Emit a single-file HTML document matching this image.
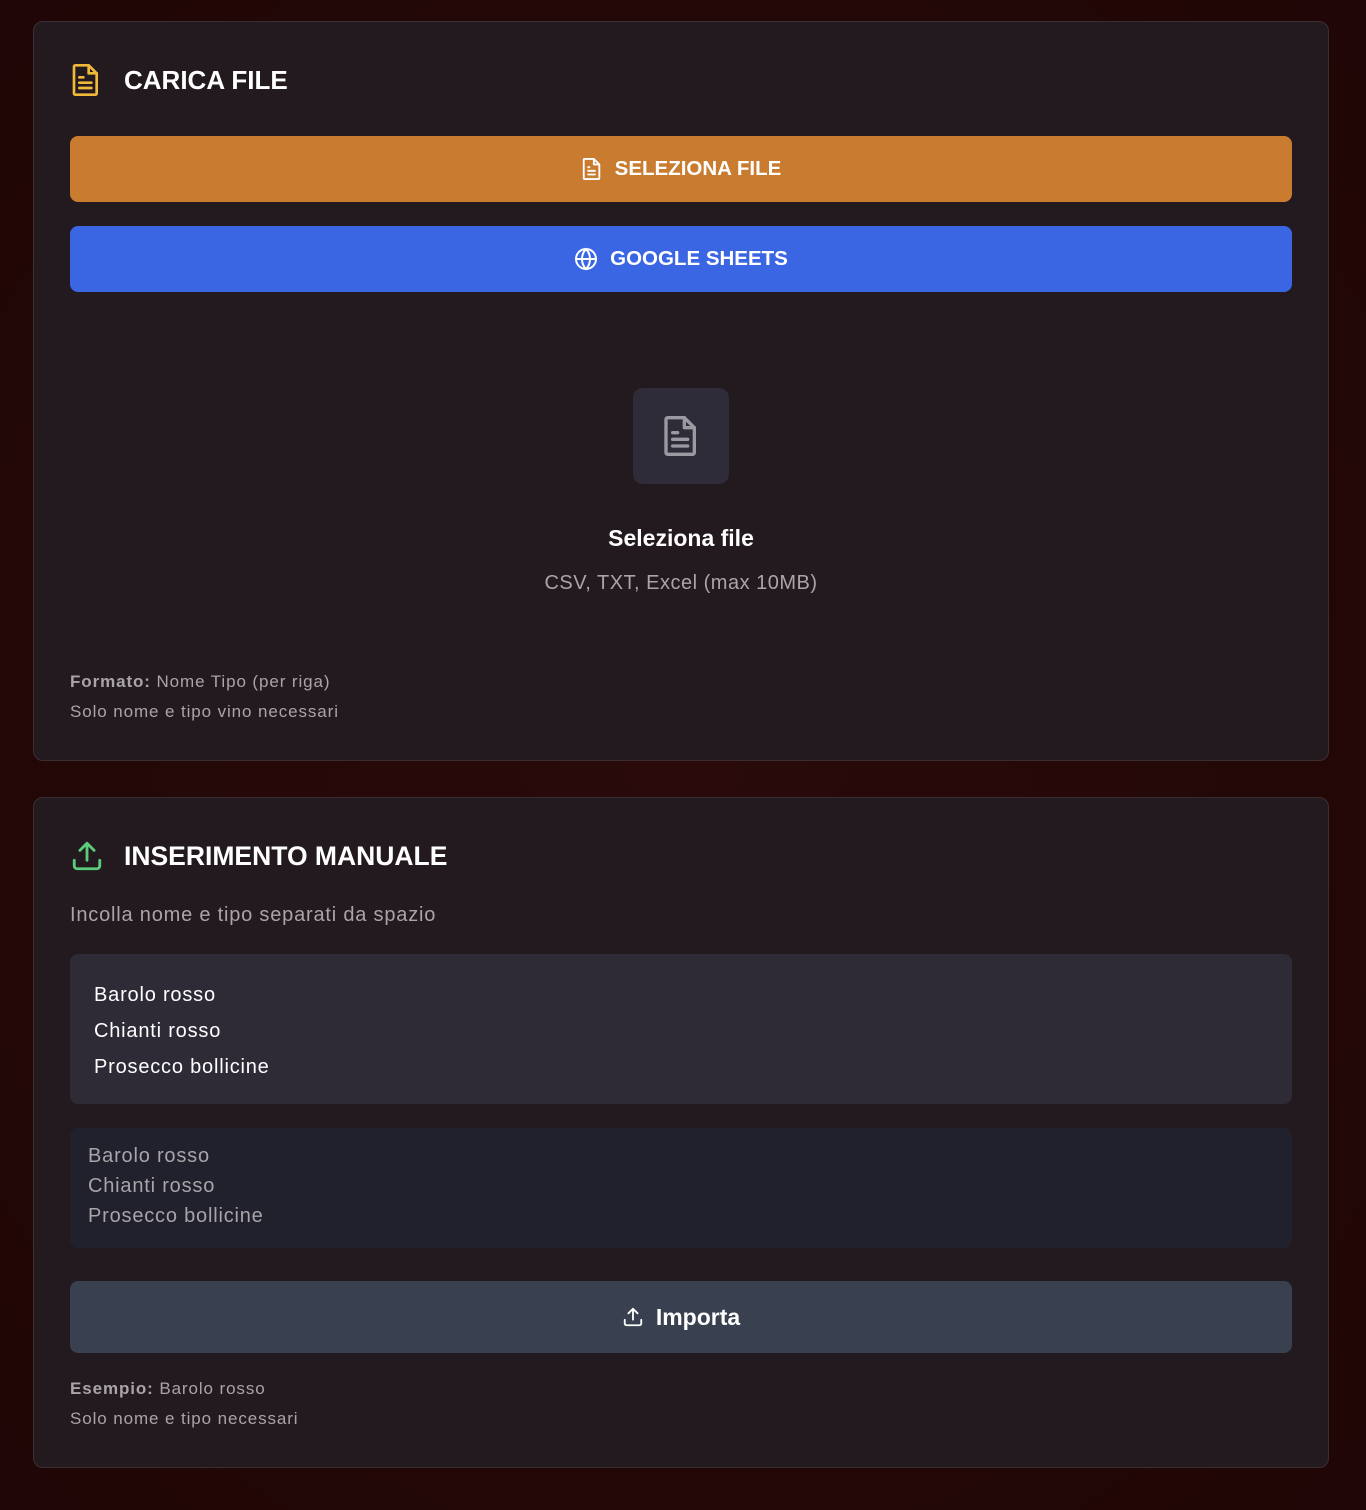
<!DOCTYPE html>
<html><head><meta charset="utf-8"><style>
*{box-sizing:border-box;margin:0;padding:0}
body{width:1366px;height:1510px;background:radial-gradient(ellipse at 50% 50%,#2a0a0a,#200606);font-family:"Liberation Sans",sans-serif;position:relative;overflow:hidden}
.card{position:absolute;left:33px;width:1296px;background:#231a1f;border:1px solid #3a2e33;border-radius:10px}
.h{position:absolute;left:36px;display:flex;align-items:center;color:#fff;font-weight:700;font-size:26px}
.h svg{margin-right:22px}
.btn{position:absolute;left:36px;width:1222px;height:66px;border-radius:8px;display:flex;align-items:center;justify-content:center;color:#fff;font-weight:700;font-size:20.5px;gap:12px}
.sm{position:absolute;left:36px;font-size:17px;color:#a8a4aa;line-height:30px;letter-spacing:0.9px}
</style></head><body>
<div class="card" style="top:21px;height:740px">
 <div class="h" style="top:40px"><svg width="32" height="36" viewBox="0 0 24 26" fill="none" stroke="#f0b93a" stroke-width="2" stroke-linejoin="round" stroke-linecap="round"><path d="M4 2h10l6 6v15a1 1 0 0 1-1 1H4a1 1 0 0 1-1-1V3a1 1 0 0 1 1-1z"/><path d="M14 2v6h6"/><path d="M7 11h3M7 15h9M7 19h9"/></svg>CARICA FILE</div>
 <div class="btn" style="top:114px;background:#c97c30"><svg width="22" height="24" viewBox="0 0 24 26" fill="none" stroke="#fff" stroke-width="2" stroke-linejoin="round"><path d="M4 2h10l6 6v15a1 1 0 0 1-1 1H4a1 1 0 0 1-1-1V3a1 1 0 0 1 1-1z"/><path d="M14 2v6h6M7 11h3M7 15h9M7 19h9"/></svg>SELEZIONA FILE</div>
 <div class="btn" style="top:204px;background:#3a66e3"><svg width="24" height="24" viewBox="0 0 24 24" fill="none" stroke="#fff" stroke-width="2"><circle cx="12" cy="12" r="10"/><path d="M2 12h20M12 2c3 3 4 6 4 10s-1 7-4 10c-3-3-4-6-4-10s1-7 4-10z"/></svg>GOOGLE SHEETS</div>
 <div style="position:absolute;left:599px;top:366px;width:96px;height:96px;background:#2e2c38;border-radius:10px;display:flex;align-items:center;justify-content:center"><svg width="40" height="46" viewBox="0 0 24 26" fill="none" stroke="#9a9aa2" stroke-width="2" stroke-linejoin="round" stroke-linecap="round"><path d="M4 2h10l6 6v15a1 1 0 0 1-1 1H4a1 1 0 0 1-1-1V3a1 1 0 0 1 1-1z"/><path d="M14 2v6h6M7 11h3M7 15h9M7 19h9"/></svg></div>
 <div style="position:absolute;left:0;width:100%;top:503px;text-align:center;color:#fff;font-weight:700;font-size:23px">Seleziona file</div>
 <div style="position:absolute;left:0;width:100%;top:550px;text-align:center;color:#a8a4aa;font-size:20px;letter-spacing:0.5px">CSV, TXT, Excel (max 10MB)</div>
 <div class="sm" style="top:645px"><b>Formato:</b> Nome Tipo (per riga)<br>Solo nome e tipo vino necessari</div>
</div>
<div class="card" style="top:797px;height:671px">
 <div class="h" style="top:41px"><svg width="34" height="34" viewBox="0 0 24 24" fill="none" stroke="#5ccc7a" stroke-width="2" stroke-linecap="round" stroke-linejoin="round"><path d="M3 15v4a2 2 0 0 0 2 2h14a2 2 0 0 0 2-2v-4M12 15V3M7 8l5-5 5 5"/></svg><span style="margin-left:-2px;font-size:26.5px">INSERIMENTO MANUALE</span></div>
 <div style="position:absolute;left:36px;top:106px;color:#a8a4aa;font-size:20px;letter-spacing:0.8px">Incolla nome e tipo separati da spazio</div>
 <div style="position:absolute;left:36px;top:156px;width:1222px;height:150px;background:#2e2b36;border-radius:8px;padding:23px 24px;color:#fff;font-size:20px;line-height:36px;letter-spacing:0.8px">Barolo rosso<br>Chianti rosso<br>Prosecco bollicine</div>
 <div style="position:absolute;left:36px;top:330px;width:1222px;height:120px;background:#20212c;border-radius:8px;padding:13px 18px;color:#a8a4aa;font-size:20px;line-height:30px;letter-spacing:0.8px">Barolo rosso<br>Chianti rosso<br>Prosecco bollicine</div>
 <div class="btn" style="top:483px;height:72px;background:#394050;font-size:23px"><svg width="22" height="22" viewBox="0 0 24 24" fill="none" stroke="#fff" stroke-width="2" stroke-linecap="round" stroke-linejoin="round"><path d="M3 15v4a2 2 0 0 0 2 2h14a2 2 0 0 0 2-2v-4M12 15V3M7 8l5-5 5 5"/></svg>Importa</div>
 <div class="sm" style="top:576px"><b>Esempio:</b> Barolo rosso<br>Solo nome e tipo necessari</div>
</div>
</body></html>
